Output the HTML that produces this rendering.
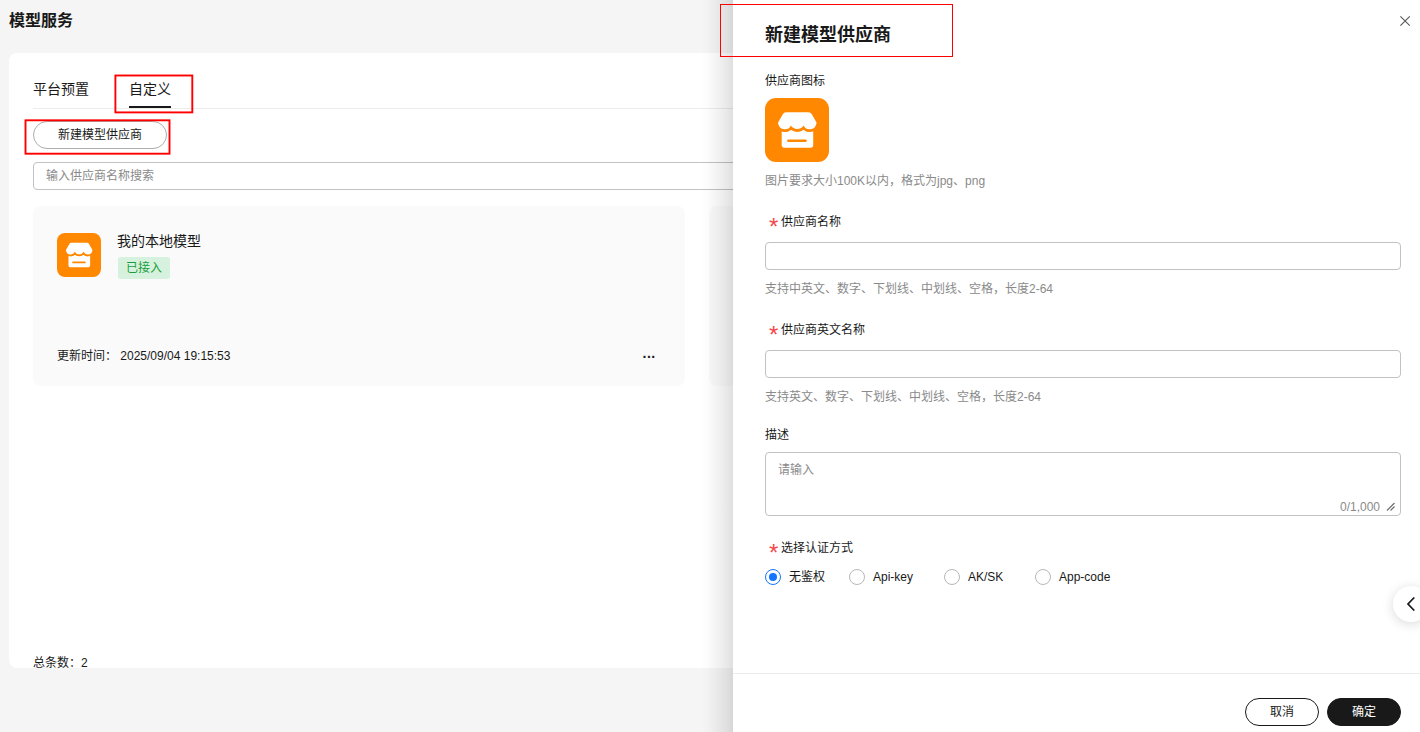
<!DOCTYPE html>
<html lang="zh-CN">
<head>
<meta charset="utf-8">
<title>模型服务</title>
<style>
*{box-sizing:border-box;margin:0;padding:0}
html,body{width:1420px;height:732px;overflow:hidden}
body{background:#f5f5f5;font-family:"Liberation Sans","Noto Sans CJK SC",sans-serif;color:#191919;font-size:12px;position:relative}
.abs{position:absolute;white-space:nowrap}
.page-title{left:9px;top:9px;font-size:16px;font-weight:700;line-height:24px;color:#191919}
.main{left:9px;top:53px;width:1500px;height:615px;background:#fff;border-radius:8px;overflow:hidden}
.tab{font-size:14px;line-height:20px;color:#191919}
.tabline{left:24px;top:55px;width:1400px;height:1px;background:#ececec}
.tabink{left:120px;top:53px;width:42px;height:2px;background:#191919}
.btn-new{left:24px;top:68px;width:134px;height:28px;border:1px solid #adadad;border-radius:14px;text-align:center;line-height:26px;font-size:12px;background:#fff}
.search{left:24px;top:109px;width:1400px;height:28px;border:1px solid #c2c2c2;border-radius:4px;line-height:26px;padding-left:12px;color:#8a8a8a;font-size:12px}
.card{top:153px;width:652px;height:180px;background:#fafafa;border-radius:8px}
.ico{background:#ff8800;position:absolute}
.tag{left:85px;top:51px;width:52px;height:22px;border-radius:3px;background:#d6f2de;color:#1a9e3b;font-size:12px;line-height:23px;text-align:center}
.red{border:2px solid #f00;position:absolute}
.drawer{left:733px;top:0;width:687px;height:732px;background:#fff}
.dshadow{left:701px;top:0;width:32px;height:732px;background:linear-gradient(to right,rgba(0,0,0,0) 0%,rgba(0,0,0,.012) 20%,rgba(0,0,0,.05) 53%,rgba(0,0,0,.082) 77%,rgba(0,0,0,.125) 100%)}
.dtitle{left:32px;top:21px;font-size:18px;font-weight:700;line-height:28px;color:#191919}
.lbl{font-size:12px;line-height:18px;color:#191919}
.hint{font-size:12px;line-height:18px;color:#8a8a8a}
.star{position:absolute;left:-12px;top:2px;color:#f5474b;font-size:24px;line-height:24px;font-family:"Liberation Sans",sans-serif}
.inp{left:32px;width:636px;height:28px;border:1px solid #c2c2c2;border-radius:4px;background:#fff}
.radio{width:16px;height:16px;border-radius:50%;border:1px solid #b8b8b8;background:#fff;position:absolute}
.radio.on{border-color:#1476ff}
.radio.on::after{content:"";position:absolute;left:3px;top:3px;width:8px;height:8px;border-radius:50%;background:#1476ff}
.fbtn{top:698px;width:74px;height:28px;border-radius:14px;font-size:12px;line-height:26px;text-align:center;border:1px solid #191919}
</style>
</head>
<body>
<div class="abs page-title">模型服务</div>

<div class="abs main">
  <div class="abs tab" style="left:24px;top:26px">平台预置</div>
  <div class="abs tab" style="left:120px;top:26px">自定义</div>
  <div class="abs tabline"></div>
  <div class="abs tabink"></div>
  <div class="abs btn-new">新建模型供应商</div>
  <div class="abs search">输入供应商名称搜索</div>

  <div class="abs card" style="left:24px">
    <div class="ico" style="left:24px;top:27px;width:44px;height:44px;border-radius:8px">
      <svg width="44" height="44" viewBox="0 0 64 64"><rect x="16.700" y="26" width="31.500" height="23.700" rx="2.600" fill="#fff"/><path d="M23.400 42.800H40.500" stroke="#ff8800" stroke-width="2.600" stroke-linecap="round" fill="none"/><path d="M21.200 14.300H43.400Q45.800 14.300 46.800 16.300L50.400 22.400Q51.900 24.600 51.300 26A6.700 6.700 0 0 1 38.700 27.400A7.400 7.400 0 0 1 25.900 27.400A6.700 6.700 0 0 1 13.300 26Q12.700 24.600 14.200 22.400L17.800 16.300Q18.800 14.300 21.200 14.300Z" fill="#fff" stroke="#ff8800" stroke-width="5.600" stroke-linejoin="round" style="paint-order:stroke"/></svg>
    </div>
    <div class="abs" style="left:84px;top:25px;font-size:14px;line-height:20px">我的本地模型</div>
    <div class="abs tag">已接入</div>
    <div class="abs" style="left:24px;top:141px;font-size:12px;line-height:18px">更新时间： 2025/09/04 19:15:53</div>
    <div class="abs" style="left:609.500px;top:138px;font-size:14px;font-weight:700;line-height:18px;letter-spacing:.5px">...</div>
  </div>
  <div class="abs card" style="left:700px"></div>

  <div class="abs" style="left:24px;top:601px;font-size:12px;line-height:18px">总条数：2</div>
</div>

<svg class="abs" style="left:0;top:0;pointer-events:none" width="733" height="200"><rect x="115.400" y="75.500" width="76.900" height="36.900" fill="none" stroke="#ff0000" stroke-width="1.900"/><rect x="25.500" y="120.300" width="144" height="33.400" fill="none" stroke="#ff0000" stroke-width="1.900"/></svg>

<div class="abs dshadow"></div>
<div class="abs drawer">
  <div class="abs dtitle">新建模型供应商</div>
  <svg class="abs" style="left:666px;top:15px" width="12" height="12" viewBox="0 0 12 12"><path d="M1.400 1.300l9.400 9.400M10.800 1.300l-9.400 9.400" stroke="#575757" stroke-width="1.100" fill="none"/></svg>

  <div class="abs lbl" style="left:32px;top:72px">供应商图标</div>
  <div class="ico" style="left:32px;top:98px;width:64px;height:64px;border-radius:11px">
    <svg width="64" height="64" viewBox="0 0 64 64"><rect x="16.700" y="26" width="31.500" height="23.700" rx="2.600" fill="#fff"/><path d="M23.400 42.800H40.500" stroke="#ff8800" stroke-width="2.600" stroke-linecap="round" fill="none"/><path d="M21.200 14.300H43.400Q45.800 14.300 46.800 16.300L50.400 22.400Q51.900 24.600 51.300 26A6.700 6.700 0 0 1 38.700 27.400A7.400 7.400 0 0 1 25.900 27.400A6.700 6.700 0 0 1 13.300 26Q12.700 24.600 14.200 22.400L17.800 16.300Q18.800 14.300 21.200 14.300Z" fill="#fff" stroke="#ff8800" stroke-width="5.600" stroke-linejoin="round" style="paint-order:stroke"/></svg>
  </div>
  <div class="abs hint" style="left:32px;top:172px">图片要求大小100K以内，格式为jpg、png</div>

  <div class="abs lbl" style="left:48px;top:213px"><span class="star">*</span>供应商名称</div>
  <div class="abs inp" style="top:242px"></div>
  <div class="abs hint" style="left:32px;top:280px">支持中英文、数字、下划线、中划线、空格，长度2-64</div>

  <div class="abs lbl" style="left:48px;top:321px"><span class="star">*</span>供应商英文名称</div>
  <div class="abs inp" style="top:350px"></div>
  <div class="abs hint" style="left:32px;top:388px">支持英文、数字、下划线、中划线、空格，长度2-64</div>

  <div class="abs lbl" style="left:32px;top:426px">描述</div>
  <div class="abs inp" style="top:452px;height:64px"></div>
  <div class="abs hint" style="left:45px;top:461px">请输入</div>
  <div class="abs hint" style="left:607px;top:498px">0/1,000</div>
  <svg class="abs" style="left:653px;top:502px" width="10" height="10" viewBox="0 0 10 10"><path d="M1 8.500L8.500 1M4.500 8.500L8.500 4.500" stroke="#6e6e6e" stroke-width="1.200" fill="none"/></svg>

  <div class="abs lbl" style="left:48px;top:539px"><span class="star">*</span>选择认证方式</div>
  <div class="radio on" style="left:32px;top:569px"></div>
  <div class="abs lbl" style="left:56px;top:568px">无鉴权</div>
  <div class="radio" style="left:116px;top:569px"></div>
  <div class="abs lbl" style="left:140px;top:568px">Api-key</div>
  <div class="radio" style="left:211px;top:569px"></div>
  <div class="abs lbl" style="left:235px;top:568px">AK/SK</div>
  <div class="radio" style="left:302px;top:569px"></div>
  <div class="abs lbl" style="left:326px;top:568px">App-code</div>

  <div class="abs" style="left:0;top:673px;width:687px;height:1px;background:#ececec"></div>
  <div class="abs fbtn" style="left:512px;background:#fff;color:#191919">取消</div>
  <div class="abs fbtn" style="left:594px;background:#191919;color:#fff">确定</div>

  <div class="abs" style="left:660px;top:586px;width:36px;height:36px;border-radius:50%;background:#fff;box-shadow:0 2px 12px rgba(0,0,0,.15)"></div>
  <svg class="abs" style="left:673px;top:597px" width="10" height="14" viewBox="0 0 10 14"><path d="M8.300 .5L2 7l6.300 6.500" stroke="#191919" stroke-width="1.700" fill="none"/></svg>
</div>
<div class="red" style="left:720px;top:4px;width:233px;height:53px;border-width:1px"></div>
</body>
</html>
